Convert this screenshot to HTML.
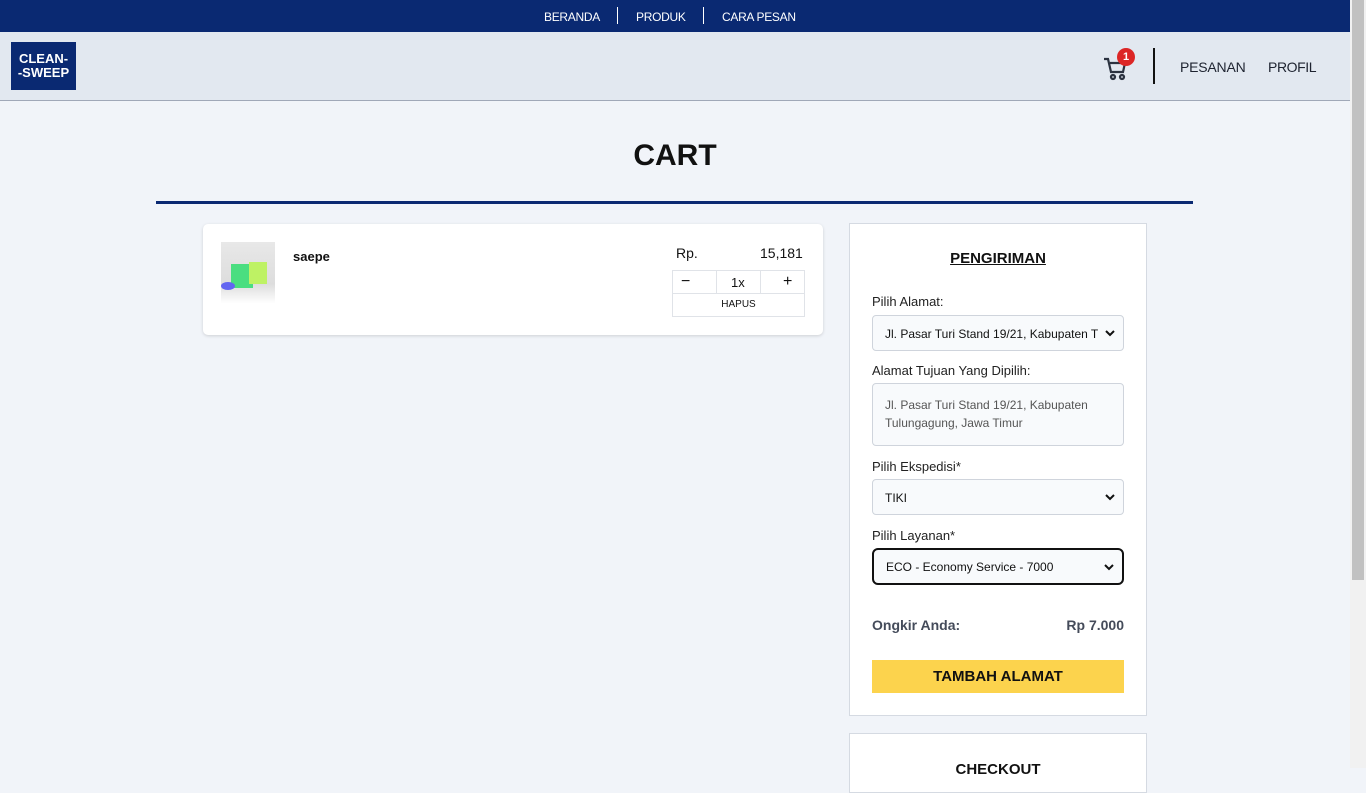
<!DOCTYPE html>
<html><head><meta charset="utf-8"><style>
*{box-sizing:border-box;margin:0;padding:0}
body{width:1366px;height:768px;overflow:hidden;background:#f1f4f9;font-family:"Liberation Sans","DejaVu Sans",sans-serif;color:#111;position:relative}
.a{position:absolute}
.top{left:0;top:0;width:1350px;height:32px;background:#0a2972;color:#fff;font-size:12px}
.top span{position:absolute;top:10px}
.sep{position:absolute;top:7px;width:1px;height:17px;background:#fff}
.bar{left:0;top:32px;width:1350px;height:69px;background:#e2e8f0;border-bottom:1px solid #a0a8b8}
.sb{left:1350px;top:0;width:16px;height:768px;background:#f1f1f1}
.thumb{left:1352px;top:0;width:12px;height:580px;background:#c1c1c1}
.lbl{font-size:13px;color:#222}
.sel{border:1px solid #cfd4dc;border-radius:4px;background:#f8fafc;font-size:12px;color:#111;padding-left:12px}
.chev{position:absolute;right:8px;top:50%;margin-top:-5px}
</style></head><body>
<div class="a top">
<span style="left:544px;letter-spacing:-0.3px">BERANDA</span><div class="sep" style="left:617px"></div>
<span style="left:636px;letter-spacing:-0.3px">PRODUK</span><div class="sep" style="left:703px"></div>
<span style="left:722px;letter-spacing:-0.3px">CARA PESAN</span>
</div>
<div class="a bar"></div>
<div class="a" style="left:11px;top:42px;width:65px;height:48px;background:#0a2972;color:#fff;font:bold 13px/14px 'Liberation Sans',sans-serif;text-align:center;padding-top:10px">CLEAN-<br>-SWEEP</div>
<svg class="a" style="left:1103px;top:56px" width="26" height="26" viewBox="0 0 26 26" fill="none" stroke="#2b3240" stroke-width="2.2"><path d="M1 3h4l3 13h12l2-9H7"/><circle cx="10" cy="21" r="2"/><circle cx="19" cy="21" r="2"/></svg>
<div class="a" style="left:1117px;top:48px;width:18px;height:18px;border-radius:50%;background:#dc2626;color:#fff;font-size:11px;font-weight:bold;text-align:center;line-height:18px">1</div>
<div class="a" style="left:1153px;top:48px;width:2px;height:36px;background:#111"></div>
<div class="a" style="left:1180px;top:59px;font-size:14px;color:#1e2330;letter-spacing:-0.2px">PESANAN</div>
<div class="a" style="left:1268px;top:59px;font-size:14px;color:#1e2330;letter-spacing:-0.4px">PROFIL</div>
<div class="a" style="left:0;width:1350px;top:139px;text-align:center;font-size:30px;font-weight:bold;color:#111">CART</div>
<div class="a" style="left:156px;top:201px;width:1037px;height:3px;background:#0a2972"></div>
<div class="a" style="left:203px;top:224px;width:620px;height:111px;background:#fff;border-radius:5px;box-shadow:0 1px 3px rgba(0,0,0,.15)"></div>
<div class="a" style="left:221px;top:242px;width:54px;height:70px;background:linear-gradient(#e8e8e8 0,#ddd 60%,#fff 88%)">
<div class="a" style="left:10px;top:22px;width:22px;height:24px;background:#4ade80"></div>
<div class="a" style="left:28px;top:20px;width:18px;height:22px;background:#bef264"></div>
<div class="a" style="left:0;top:40px;width:14px;height:8px;background:#6366f1;border-radius:50%"></div>
</div>
<div class="a" style="left:293px;top:249px;font-size:13px;font-weight:bold">saepe</div>
<div class="a" style="left:676px;top:245px;font-size:14px">Rp.</div>
<div class="a" style="left:760px;top:245px;font-size:14px">15,181</div>
<div class="a" style="left:672px;top:270px;width:133px;height:47px;border:1px solid #e0e3e8"></div>
<div class="a" style="left:672px;top:293px;width:133px;height:1px;background:#e0e3e8"></div>
<div class="a" style="left:716px;top:270px;width:1px;height:23px;background:#e0e3e8"></div>
<div class="a" style="left:760px;top:270px;width:1px;height:23px;background:#e0e3e8"></div>
<div class="a" style="left:681px;top:273px;font-size:16px">−</div>
<div class="a" style="left:731px;top:275px;font-size:13px">1x</div>
<div class="a" style="left:783px;top:273px;font-size:16px">+</div>
<div class="a" style="left:672px;top:299px;width:133px;text-align:center;font-size:10px">HAPUS</div>

<div class="a" style="left:849px;top:223px;width:298px;height:493px;background:#fff;border:1px solid #d5dae2"></div>
<div class="a" style="left:849px;top:250px;width:298px;text-align:center;font-size:15px;font-weight:bold;text-decoration:underline">PENGIRIMAN</div>
<div class="a lbl" style="left:872px;top:294px">Pilih Alamat:</div>
<div class="a sel" style="left:872px;top:315px;width:252px;height:36px;line-height:36px;overflow:hidden;white-space:nowrap">Jl. Pasar Turi Stand 19/21, Kabupaten T<svg class="chev" width="10" height="10" viewBox="0 0 10 10"><path d="M1 3l4 4 4-4" stroke="#111" stroke-width="2" fill="none"/></svg></div>
<div class="a lbl" style="left:872px;top:363px">Alamat Tujuan Yang Dipilih:</div>
<div class="a sel" style="left:872px;top:383px;width:252px;height:63px;color:#555;line-height:18px;padding-top:12px">Jl. Pasar Turi Stand 19/21, Kabupaten Tulungagung, Jawa Timur</div>
<div class="a lbl" style="left:872px;top:459px">Pilih Ekspedisi*</div>
<div class="a sel" style="left:872px;top:479px;width:252px;height:36px;line-height:36px">TIKI<svg class="chev" width="10" height="10" viewBox="0 0 10 10"><path d="M1 3l4 4 4-4" stroke="#111" stroke-width="2" fill="none"/></svg></div>
<div class="a lbl" style="left:872px;top:528px">Pilih Layanan*</div>
<div class="a sel" style="left:872px;top:548px;width:252px;height:37px;line-height:35px;border:2px solid #111;border-radius:6px">ECO - Economy Service - 7000<svg class="chev" width="10" height="10" viewBox="0 0 10 10"><path d="M1 3l4 4 4-4" stroke="#111" stroke-width="2" fill="none"/></svg></div>
<div class="a" style="left:872px;top:617px;font-size:14px;font-weight:bold;color:#444b5a">Ongkir Anda:</div>
<div class="a" style="left:1024px;width:100px;text-align:right;top:617px;font-size:14px;font-weight:bold;color:#444b5a">Rp 7.000</div>
<div class="a" style="left:872px;top:660px;width:252px;height:33px;background:#fcd34d;text-align:center;line-height:33px;font-size:15px;font-weight:bold">TAMBAH ALAMAT</div>
<div class="a" style="left:849px;top:733px;width:298px;height:60px;background:#fff;border:1px solid #d5dae2"></div>
<div class="a" style="left:849px;top:761px;width:298px;text-align:center;font-size:15px;font-weight:bold">CHECKOUT</div>
<div class="a sb"></div><div class="a thumb"></div>
</body></html>
